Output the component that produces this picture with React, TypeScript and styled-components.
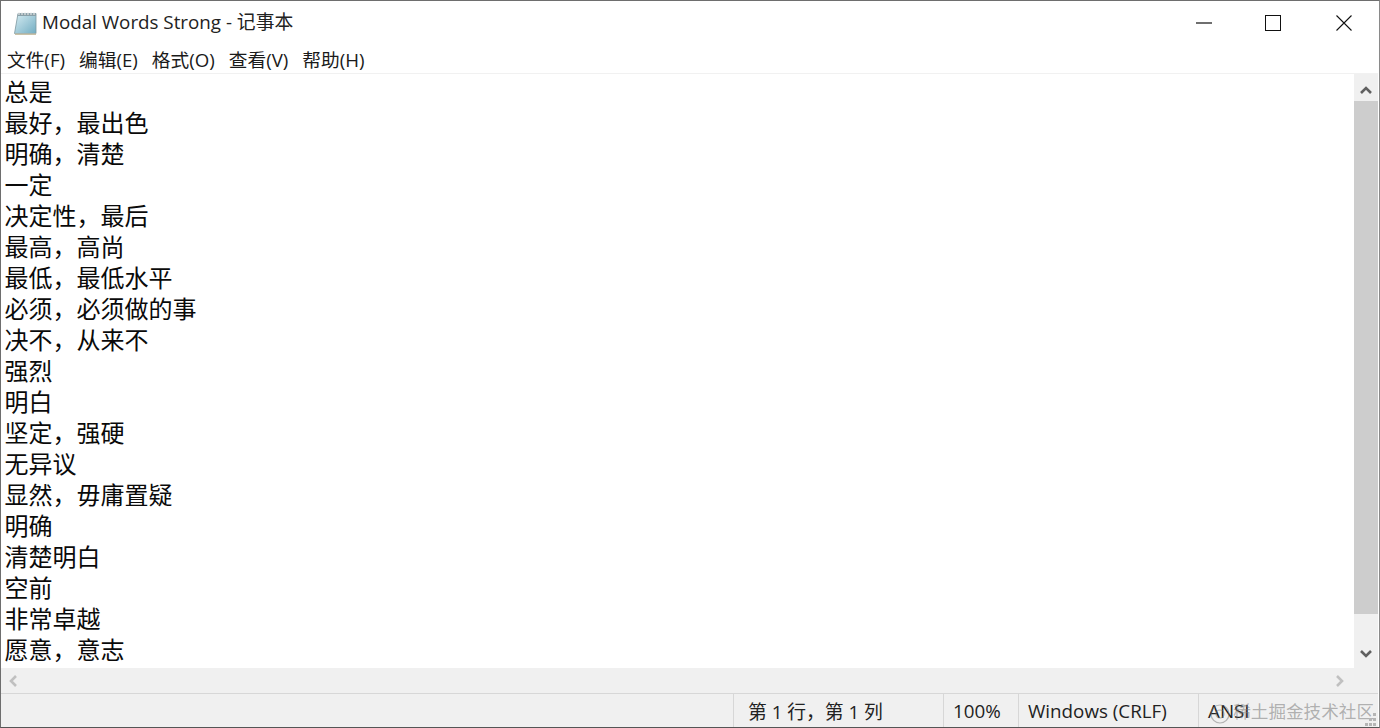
import React from "react";
import styled, { createGlobalStyle } from "styled-components";

const Global = createGlobalStyle`
  html, body { margin: 0; padding: 0; background: #fff; overflow: hidden; }
`;

const FONT = `"Open Sans", "Noto Sans", "Noto Sans CJK SC", sans-serif`;
const CJK = `"Noto Sans CJK SC", "Noto Sans", sans-serif`;

const Win = styled.div`
  position: relative;
  width: 1380px;
  height: 728px;
  box-sizing: border-box;
  border: 1px solid #6e6e6e;
  border-bottom-color: #555;
  border-right-color: #8a8a8a;
  padding-right: 1px;
  display: flex;
  flex-direction: column;
  font-family: ${FONT};
  color: #111;
  overflow: hidden;
`;

const TitleBar = styled.div`
  height: 43px;
  display: flex;
  align-items: center;
  padding-left: 12px;
  flex: none;
`;

const AppIcon = styled.svg`
  width: 24px;
  height: 24px;
  flex: none;
  margin-right: 5px;
`;

const Title = styled.div`
  font-size: 18.8px;
  color: #222;
  white-space: nowrap;
  flex: 1;
  line-height: 42px;
  align-self: flex-start;
`;

const WinBtn = styled.div<{ $w: number }>`
  width: ${(p) => p.$w}px;
  height: 43px;
  display: flex;
  align-items: center;
  justify-content: center;
  flex: none;
`;

const MenuBar = styled.div`
  height: 30px;
  display: flex;
  align-items: center;
  padding: 0 0 1px 6px;
  gap: 14px;
  flex: none;
  box-sizing: border-box;
  border-bottom: 1px solid #f1f1f1;
`;

const MenuItem = styled.span`
  font-family: ${FONT};
  font-size: 18.7px;
  color: #1a1a1a;
  white-space: nowrap;
`;

const Body = styled.div`
  flex: 1;
  min-height: 0;
  display: flex;
`;

const Editor = styled.div`
  flex: 1;
  padding: 1px 0 0 3.5px;
  font-family: ${CJK};
  font-size: 24px;
  line-height: 31px;
  color: #0a0a0a;
`;

const Line = styled.div`
  white-space: nowrap;
  height: 31px;
`;

const VScroll = styled.div`
  width: 24px;
  flex: none;
  background: #f0f0f0;
  display: flex;
  flex-direction: column;
`;

const ScrollBtn = styled.div<{ $size: number; $top: number }>`
  height: ${(p) => p.$size}px;
  box-sizing: border-box;
  padding-top: ${(p) => p.$top}px;
  flex: none;
  display: flex;
  align-items: flex-start;
  justify-content: center;
`;

const VThumb = styled.div`
  flex: 1;
  background: #cdcdcd;
`;

const HScroll = styled.div`
  height: 25px;
  flex: none;
  background: #f0f0f0;
  display: flex;
  align-items: center;
  justify-content: space-between;
  padding: 0 31px 0 5px;
`;

const Status = styled.div`
  height: 34px;
  flex: none;
  background: #f0f0f0;
  border-top: 1px solid #d7d7d7;
  display: flex;
  justify-content: flex-end;
  box-sizing: border-box;
`;

const Cell = styled.div<{ $w: number; $pad: number }>`
  width: ${(p) => p.$w}px;
  box-sizing: border-box;
  border-left: 1px solid #d7d7d7;
  padding-left: ${(p) => p.$pad}px;
  display: flex;
  align-items: center;
  font-size: 18.8px;
  color: #222;
  white-space: nowrap;
  font-family: ${FONT};
`;

const Watermark = styled.div`
  position: absolute;
  right: 5px;
  bottom: 2px;
  font-family: "Noto Sans CJK SC", sans-serif;
  font-size: 17.6px;
  color: rgba(120, 120, 120, 0.55);
  white-space: nowrap;
  line-height: 28px;
`;

const WatermarkMark = styled.svg`
  position: absolute;
  right: 148px;
  bottom: 1px;
  width: 22px;
  height: 24px;
`;

const Dots = styled.svg`
  position: absolute;
  right: 2px;
  bottom: 0;
  width: 12px;
  height: 14px;
`;

const lines = [
  "总是",
  "最好，最出色",
  "明确，清楚",
  "一定",
  "决定性，最后",
  "最高，高尚",
  "最低，最低水平",
  "必须，必须做的事",
  "决不，从来不",
  "强烈",
  "明白",
  "坚定，强硬",
  "无异议",
  "显然，毋庸置疑",
  "明确",
  "清楚明白",
  "空前",
  "非常卓越",
  "愿意，意志",
];

const menus = ["文件(F)", "编辑(E)", "格式(O)", "查看(V)", "帮助(H)"];

const Chevron = ({ d, color }: { d: string; color: string }) => (
  <svg width="14" height="14" viewBox="0 0 14 14" fill="none">
    <path d={d} stroke={color} strokeWidth="2.6" />
  </svg>
);

export default function App() {
  return (
    <>
      <Global />
      <Win>
        <TitleBar>
          <AppIcon viewBox="0 0 24 24">
            <defs>
              <linearGradient id="pad" x1="0" y1="0" x2="1" y2="1">
                <stop offset="0" stopColor="#d8edf3" />
                <stop offset="1" stopColor="#72adc2" />
              </linearGradient>
            </defs>
            <path d="M5 2.5H23V22.5H1.5Z" fill="url(#pad)" stroke="#7c97a0" strokeWidth="0.8" />
            <path d="M5 2.5H23V5H4.5Z" fill="#8aa0a8" />
            <path d="M6 1.5V4M9 1.5V4M12 1.5V4M15 1.5V4M18 1.5V4M21 1.5V4" stroke="#e4e4e4" strokeWidth="1.2" />
            <path d="M2 22.5H23V24H2Z" fill="#c9c2a8" />
          </AppIcon>
          <Title>Modal Words Strong - 记事本</Title>
          <WinBtn $w={65}>
            <svg width="16" height="2" viewBox="0 0 16 2">
              <rect width="16" height="1.2" y="0.4" fill="#111" />
            </svg>
          </WinBtn>
          <WinBtn $w={73}>
            <svg width="16" height="16" viewBox="0 0 16 16" fill="none">
              <rect x="0.5" y="0.5" width="15" height="15" stroke="#111" />
            </svg>
          </WinBtn>
          <WinBtn $w={69}>
            <svg width="16" height="16" viewBox="0 0 16 16" fill="none">
              <path d="M0.5 0.5L15.5 15.5M15.5 0.5L0.5 15.5" stroke="#111" strokeWidth="1.1" />
            </svg>
          </WinBtn>
        </TitleBar>
        <MenuBar>
          {menus.map((m) => (
            <MenuItem key={m}>{m}</MenuItem>
          ))}
        </MenuBar>
        <Body>
          <Editor>
            {lines.map((l, i) => (
              <Line key={i}>{l}</Line>
            ))}
          </Editor>
          <VScroll>
            <ScrollBtn $size={27} $top={9}>
              <Chevron d="M2 10L7 5L12 10" color="#606060" />
            </ScrollBtn>
            <VThumb />
            <ScrollBtn $size={54} $top={33}>
              <Chevron d="M2 4L7 9L12 4" color="#606060" />
            </ScrollBtn>
          </VScroll>
        </Body>
        <HScroll>
          <Chevron d="M10 2L5 7L10 12" color="#c0c0c0" />
          <Chevron d="M4 2L9 7L4 12" color="#c0c0c0" />
        </HScroll>
        <Status>
          <Cell $w={210} $pad={14}>第 1 行，第 1 列</Cell>
          <Cell $w={75} $pad={9}>100%</Cell>
          <Cell $w={180} $pad={9}>Windows (CRLF)</Cell>
          <Cell $w={180} $pad={9}>ANSI</Cell>
        </Status>
        <WatermarkMark viewBox="0 0 22 24" fill="none">
          <circle cx="11" cy="12" r="9" stroke="rgba(120,120,120,0.5)" strokeWidth="1.2" />
          <circle cx="11" cy="12" r="4" stroke="rgba(120,120,120,0.5)" strokeWidth="1.2" />
        </WatermarkMark>
        <Watermark>稀土掘金技术社区</Watermark>
        <Dots viewBox="0 0 12 14" fill="#b5b5b5">
          <rect x="8" y="0" width="3" height="3" />
          <rect x="4" y="5" width="3" height="3" />
          <rect x="8" y="5" width="3" height="3" />
          <rect x="0" y="10" width="3" height="3" />
          <rect x="4" y="10" width="3" height="3" />
          <rect x="8" y="10" width="3" height="3" />
        </Dots>
      </Win>
    </>
  );
}
